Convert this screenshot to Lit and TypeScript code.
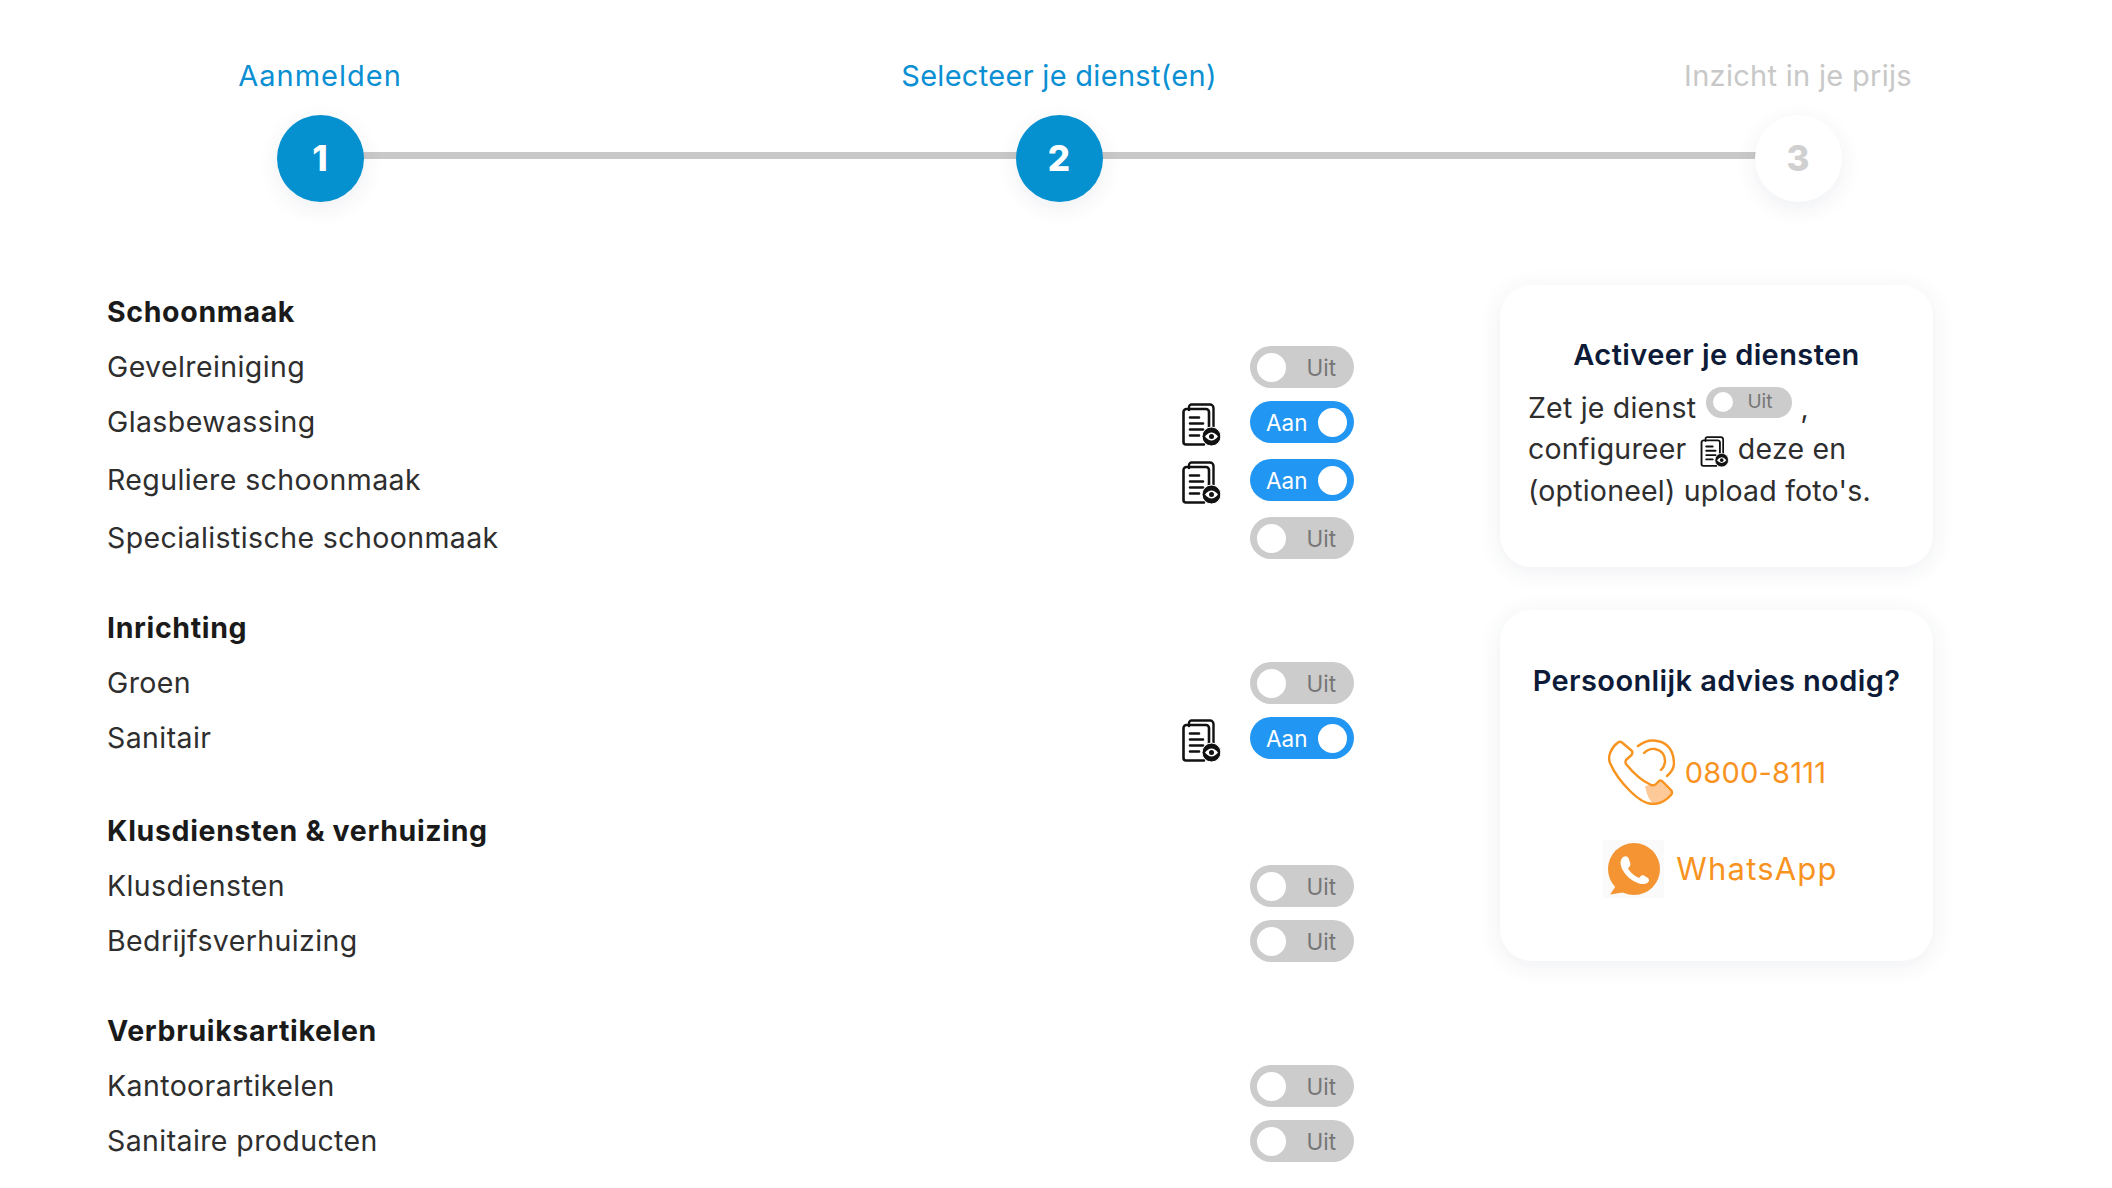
import { LitElement, html, css, svg } from "lit";
import { customElement } from "lit/decorators.js";

const docIcon = (cls: string) => html`<svg class=${cls} viewBox="0 0 39 43" fill="none" stroke="#111" stroke-linecap="round" stroke-linejoin="round">
  ${svg`
  <path d="M7 7V4a2.5 2.5 0 0 1 2.5-2.5H28a3.5 3.5 0 0 1 3.5 3.5V26" stroke-width="2.4"/>
  <path d="M27 27V9a3 3 0 0 0-3-3H4.5A3 3 0 0 0 1.5 9v30a2.5 2.5 0 0 0 2.5 2.5H22" stroke-width="2.6"/>
  <path d="M8 14.5h9M8 20.5h13M8 26.5h13M8 32.5h9" stroke-width="2.6"/>
  <circle cx="29.5" cy="33.5" r="9.5" fill="#111" stroke="#fff" stroke-width="1"/>
  <path d="M23 33.5q6.5-8 13 0q-6.5 8-13 0Z" fill="#fff" stroke="none"/>
  <circle cx="29.5" cy="33.5" r="2.5" fill="#111" stroke="none"/>`}
</svg>`;

const phoneIcon = html`<svg class="phone" viewBox="0 0 67 66" fill="none" stroke="#f7931e" stroke-width="2.4" stroke-linecap="round" stroke-linejoin="round">
  ${svg`
  <path d="M37 47Q40 62 46 65Q55 65 63 56Q65 54 63 51L54 42Q52.5 41 51 42L48 45Q46 47 43 46Z" fill="#fdc998" stroke="none"/>
  <path d="M10 3.5Q12 2 14 3.5L24 12Q25 14 23.5 16L18 21Q17 23 18 25Q30 40 43 46Q46 47 48 45L51 42Q52.5 41 54 42L63 51Q65 54 63 56Q55 65 45 65Q35 65 22 52Q8 38 2 24Q0 19 2.5 13Q5 7 10 3.5Z"/>
  <path d="M30 7Q38 1 46 1.5Q65 3 66 24Q66 31 59 37"/>
  <path d="M36 14Q41 9 47 10Q57 12 57 22Q57 27 53 31"/>`}
</svg>`;

const whatsappIcon = html`<span class="wa-box"><svg class="wa" viewBox="0 0 52 52">
  ${svg`
  <circle cx="26" cy="26" r="26" fill="#f49432"/>
  <path d="M10 40L2 51.5L18 49Z" fill="#f49432"/>
  <path d="M15 14Q19 12 20.5 15L22.5 21Q22.5 23 20 25.5Q24 32 31 35Q33 32 35 32L40 35Q42 37 40 39.5Q36 42 31 40.5Q20 37 14 26Q10.5 18 15 14Z" fill="#fff"/>`}
</svg></span>`;

type Row = { name: string; on?: boolean };
const groups: { title: string; rows: Row[] }[] = [
  { title: "Schoonmaak", rows: [
    { name: "Gevelreiniging" },
    { name: "Glasbewassing", on: true },
    { name: "Reguliere schoonmaak", on: true },
    { name: "Specialistische schoonmaak" },
  ]},
  { title: "Inrichting", rows: [{ name: "Groen" }, { name: "Sanitair", on: true }] },
  { title: "Klusdiensten & verhuizing", rows: [{ name: "Klusdiensten" }, { name: "Bedrijfsverhuizing" }] },
  { title: "Verbruiksartikelen", rows: [{ name: "Kantoorartikelen" }, { name: "Sanitaire producten" }] },
];

const steps = [
  { n: "1", label: "Aanmelden", done: true },
  { n: "2", label: "Selecteer je dienst(en)", done: true },
  { n: "3", label: "Inzicht in je prijs", done: false },
];

@customElement("app-root")
export class AppRoot extends LitElement {
  static styles = css`
    :host { display: block; width: 2112px; min-height: 1188px; background: #fff; font-family: Inter, "Open Sans", sans-serif; color: #2b2b2b; }
    * { box-sizing: border-box; }
    .stepper { position: relative; display: flex; justify-content: space-between; padding: 56px 164px 0 170px; width: 2112px; }
    .line { position: absolute; left: 320px; width: 1478px; top: 152px; height: 7px; background: #c8c8c8; }
    .step { position: relative; width: 300px; display: flex; flex-direction: column; align-items: center; }
    .step-label { font-size: 29px; line-height: 40px; margin-bottom: 19px; color: #c8c8c8; white-space: nowrap; letter-spacing: 0.3px; }
    .step:nth-child(2) .step-label { letter-spacing: 1px; }
    .step.done .step-label { color: #0a8fd3; }
    .circle { width: 87px; height: 87px; border-radius: 50%; background: #fff; color: #d0d0d0; display: flex; align-items: center; justify-content: center; font-size: 35px; font-weight: 800; padding-bottom: 1px; box-shadow: 0 6px 22px rgba(40,50,90,0.08); }
    .step.done .circle { background: #0590d0; color: #fff; }
    .main { display: flex; margin-top: 83px; padding-left: 107px; }
    .list { width: 1247px; padding-top: 6px; }
    .group { margin-bottom: 48px; display: flex; flex-direction: column; gap: 13px; }
    .group:last-child { margin-bottom: 0; }
    h3 { margin: 0; font-size: 28.5px; line-height: 42px; font-weight: 700; color: #1a1a1a; letter-spacing: 0.65px; }
    .row { display: flex; align-items: flex-start; min-height: 42px; }
    .row.on { min-height: 45px; }
    .name { flex: 1; font-size: 28.5px; line-height: 42px; color: #2e2e2e; letter-spacing: 0.4px; }
    .doc { width: 39px; height: 43px; margin: 2px 29px 0 0; }
    .toggle { width: 104px; height: 42px; border-radius: 21px; background: #cccccc; display: flex; align-items: center; justify-content: space-between; padding: 0 18px 0 7px; font-size: 22.5px; color: #767676; }
    .toggle.on { background: #2196f3; color: #fff; padding: 0 7px 0 16px; }
    .knob { width: 29px; height: 29px; border-radius: 50%; background: #fff; }
    aside { width: 433px; margin-left: 146px; display: flex; flex-direction: column; gap: 43px; }
    .card { border-radius: 32px; background: #fff; box-shadow: 0 4px 24px rgba(40,50,90,0.08); }
    .card h2 { margin: 0; text-align: center; font-size: 29px; line-height: 40px; font-weight: 600; color: #0d1b38; white-space: nowrap; letter-spacing: 0.4px; }
    .c1 { padding: 50px 28px 56px; }
    .c1 p { margin: 11.5px 0 0; font-size: 28.5px; line-height: 41.5px; color: #2e2e2e; white-space: nowrap; letter-spacing: 0.2px; }
    .mini { display: inline-flex; vertical-align: top; align-items: center; justify-content: space-between; width: 86px; height: 31px; margin-left: 2px; border-radius: 16px; background: #cccccc; color: #767676; font-size: 19px; padding: 0 20px 0 7px; letter-spacing: 0; }
    .mini i { width: 20px; height: 20px; border-radius: 50%; background: #fff; }
    .docmini { width: 29px; height: 31px; vertical-align: top; margin: 8px 1px 0 5px; }
    .c2 { padding: 51px 0 63px; }
    .contact { display: flex; align-items: center; justify-content: center; color: #f7931e; font-size: 29px; }
    .call { margin-top: 38px; gap: 10px; padding-left: 1px; }
    .phone { width: 67px; height: 66px; }
    .call span { letter-spacing: 0.2px; }
    .wa-row { margin-top: 35px; gap: 12px; padding-left: 8px; font-size: 31px; letter-spacing: 1.2px; line-height: 40px; }
    .wa-box { width: 61px; height: 58px; background: #fafafa; display: flex; align-items: center; justify-content: center; }
    .wa { width: 52px; height: 52px; }
  `;

  private toggle(on?: boolean) {
    return on
      ? html`<div class="toggle on"><span>Aan</span><span class="knob"></span></div>`
      : html`<div class="toggle"><span class="knob"></span><span>Uit</span></div>`;
  }

  render() {
    return html`
      <div class="stepper">
        <div class="line"></div>
        ${steps.map(s => html`<div class="step ${s.done ? "done" : ""}">
          <div class="step-label">${s.label}</div>
          <div class="circle">${s.n}</div>
        </div>`)}
      </div>
      <div class="main">
        <div class="list">
          ${groups.map(g => html`<section class="group">
            <h3>${g.title}</h3>
            ${g.rows.map(r => html`<div class="row ${r.on ? "on" : ""}">
              <div class="name">${r.name}</div>
              ${r.on ? docIcon("doc") : ""}
              ${this.toggle(r.on)}
            </div>`)}
          </section>`)}
        </div>
        <aside>
          <div class="card c1">
            <h2>Activeer je diensten</h2>
            <p>Zet je dienst <span class="mini"><i></i>Uit</span> ,<br>configureer ${docIcon("docmini")} deze en<br>(optioneel) upload foto's.</p>
          </div>
          <div class="card c2">
            <h2>Persoonlijk advies nodig?</h2>
            <div class="contact call">${phoneIcon}<span>0800-8111</span></div>
            <div class="contact wa-row">${whatsappIcon}<span>WhatsApp</span></div>
          </div>
        </aside>
      </div>
    `;
  }
}
